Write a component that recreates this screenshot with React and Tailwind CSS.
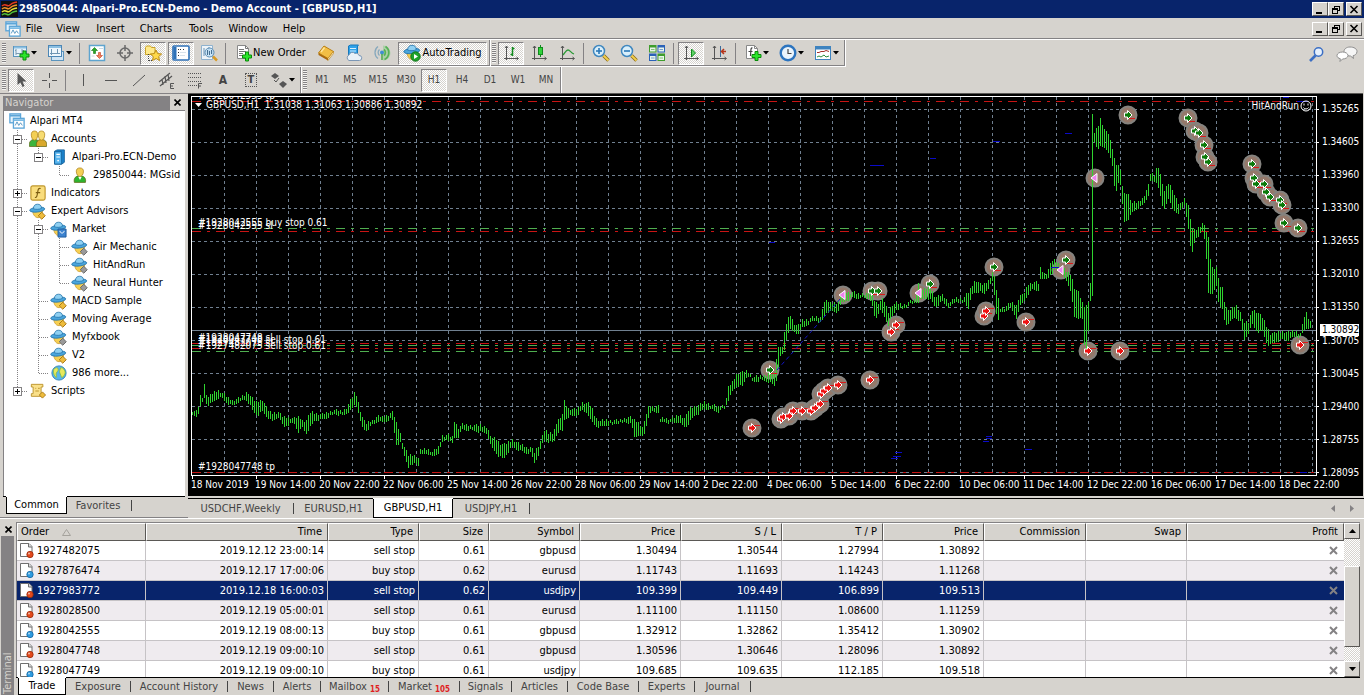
import { Fragment } from 'react';
import clsx from 'clsx';

const hatch = 'bg-[repeating-conic-gradient(#ffffff_0_25%,#d6d3ce_0_50%)] bg-[length:2px_2px]';
const raised = 'border border-t-white border-l-white border-r-[#5a5855] border-b-[#5a5855] bg-[#d6d3ce]';

/* ---------- icons ---------- */

function Icon({ children, size = 18, ...rest }) {
  return (
    <svg width={size} height={size} viewBox="0 0 18 18" fill="none" className="shrink-0" aria-hidden="true" {...rest}>
      {children}
    </svg>
  );
}

const Plus = ({ x = 7, y = 7 }) => (
  <path
    transform={`translate(${x} ${y})`}
    d="M3.500 .5h3v3h3v3h-3v3h-3v-3h-3v-3h3z"
    fill="#2be52b"
    stroke="#0a8a0a"
  />
);

const NewChartIcon = () => (
  <Icon>
    <rect x="1.500" y="2.500" width="13" height="10" fill="#e8f3fb" stroke="#5b94bd" />
    <path d="M2 3.500h12" stroke="#8cc0e2" strokeWidth="2" />
    <path d="M4 5v6M3 6.500h1M4 9.500h9M10 5v5M10 6.500h2" stroke="#7d9cb3" />
    <Plus x={7.5} y={6.5} />
  </Icon>
);

const ProfilesIcon = () => (
  <Icon>
    <rect x="4.500" y="7.500" width="12" height="9" fill="#cfe4f4" stroke="#5b94bd" />
    <rect x="1.500" y="1.500" width="13" height="11" fill="#eef6fc" stroke="#4c86b5" />
    <path d="M2 3h12" stroke="#8cc0e2" strokeWidth="2" />
    <path d="M4.500 5v6M3 9.500h10M10.500 5v5" stroke="#6f96b4" />
  </Icon>
);

const MarketWatchIcon = () => (
  <Icon>
    <rect x="1.500" y="1.500" width="15" height="15" fill="#fff" stroke="#5ea4cf" strokeWidth="1.500" />
    <path d="M6.500 3.500l3 3h-2v3h-2v-3h-2z" fill="#28a428" stroke="#0f7a0f" strokeWidth=".6" />
    <path d="M11.500 14.500l-3-3h2v-3h2v3h2z" fill="#f08060" stroke="#c23a1c" strokeWidth=".6" />
    <path d="M11 4.500h4M3.500 12h3" stroke="#c8d8e2" />
  </Icon>
);

const TargetIcon = () => (
  <Icon stroke="#6a6a6a">
    <circle cx="9" cy="9" r="5" strokeWidth="1.500" />
    <path d="M9 1v6M9 11v6M1 9h6M11 9h6" strokeWidth="1.500" />
  </Icon>
);

const star = 'M0 -5.500l1.700 3.600 3.900.4-2.900 2.600.8 3.900L0 3l-3.500 2 .8-3.900-2.900-2.600 3.900-.4z';

const FolderStarIcon = () => (
  <Icon>
    <path d="M1.500 3.500l1-1.500h4l1 1.500h3.500v7h-9.500z" fill="#ffe98a" stroke="#c9a227" />
    <path d="M4.500 10v7M5 16.500h3" stroke="#444" strokeDasharray="1 1" />
    <path d={star} transform="translate(12 11.500)" fill="#ffd94a" stroke="#b98a12" />
  </Icon>
);

const NavigatorIcon = () => (
  <Icon>
    <rect x="1" y="2" width="16" height="14" rx="1" fill="#fff" stroke="#2f72b8" strokeWidth="1.600" />
    <path d="M3 3v12" stroke="#2f72b8" strokeWidth="3" />
    <path d="M6.500 5v9M8 5.500h6" stroke="#333" strokeDasharray="1 2" />
    <path d="M8 8.500h6M8 11.500h5" stroke="#d9e3ec" />
  </Icon>
);

const TesterIcon = () => (
  <Icon>
    <path d="M1.500 1.500h11v14h-11z" fill="#eef4f9" stroke="#8fb2cf" />
    <path d="M4 4v8M9 3v7" stroke="#6b93b5" />
    <circle cx="9.500" cy="8.500" r="4.500" fill="#bfe0f6" fillOpacity=".8" stroke="#5d8db3" />
    <path d="M7.500 6v5M9.500 7v4M11.500 6v4" stroke="#456f92" />
    <path d="M13 12.500l4 4" stroke="#d89a24" strokeWidth="2.500" />
  </Icon>
);

const NewOrderIcon = () => (
  <Icon>
    <path d="M2.500 1.500h8l3 3v10h-11z" fill="#fff" stroke="#888" />
    <path d="M10.500 1.500v3h3M4 5.500h5M4 7.500h7M4 9.500h4M4 11.500h3" stroke="#777" />
    <Plus x={7} y={7.5} />
  </Icon>
);

const BookIcon = () => (
  <Icon>
    <path d="M1.500 9L7 2l9.500 5.500L11 14.500z" fill="#f2bf45" stroke="#b97e12" />
    <path d="M1.500 9v2l9.500 5.500v-2z" fill="#a9690c" />
    <path d="M11 14.500v2l5.500-7v-2z" fill="#fff1c4" stroke="#b97e12" strokeWidth=".6" />
    <path d="M4 8l3.500-4.500" stroke="#ffe59c" strokeWidth="1.500" />
  </Icon>
);

const VpsIcon = () => (
  <Icon>
    <path d="M3.500 2l2-1h8l-1 1v9h-9z" fill="#2fa3ea" stroke="#1679bd" />
    <path d="M5 4.500h6M5 7h6" stroke="#d7f0ff" strokeWidth="1.200" />
    <path d="M4 16.500a3 3 0 010-5.500 3.500 3.500 0 016-1.500 3 3 0 014 2 2.500 2.500 0 01.5 5z" fill="#e9f1f8" stroke="#7c97b5" />
  </Icon>
);

const SignalIcon = () => (
  <Icon>
    <path d="M5 2.500a7.500 7.500 0 000 12M6.500 5.500a4 4 0 000 6" stroke="#88a9bd" strokeWidth="1.300" />
    <path d="M10 1.500a7.200 7.200 0 010 15z" fill="#8fce8f" fillOpacity=".6" />
    <path d="M12.500 2.500a7.500 7.500 0 01-1 13M11 5.500a4 4 0 010 6" stroke="#57b157" strokeWidth="1.700" />
    <circle cx="9" cy="8.500" r="2" fill="#3e8fd0" />
    <path d="M9 10v6" stroke="#4aa84a" strokeWidth="1.500" />
  </Icon>
);

function HatIcon({ badge, size = 18 }) {
  return (
    <Icon size={size}>
      <path d="M4 8c0 5 3 7.500 5.500 7.500S14 13 14.500 7.500z" fill="#f6cf52" stroke="#c79520" strokeWidth=".8" />
      <ellipse cx="8.700" cy="7" rx="8" ry="2.600" fill="#4aa5dc" stroke="#1d6fa8" strokeWidth=".8" transform="rotate(-6 8.700 7)" />
      <path d="M4.500 6C5 2.500 6.500 1.300 9 1.300s4 1 4.300 4.300c-2 1.300-6.500 1.500-8.800.4z" fill="#8fd0f2" stroke="#1d6fa8" strokeWidth=".8" />
      {badge === 'play' && (
        <>
          <circle cx="12.500" cy="12.500" r="4.700" fill="#1fa32a" stroke="#0d7516" />
          <path d="M11 10l4 2.500-4 2.500z" fill="#fff" />
        </>
      )}
      {badge === 'gold' && <path d="M13.500 9.800l3.700 3.700-3.700 3.700-3.700-3.700z" fill="#eebc3c" stroke="#a87610" />}
      {badge === 'grey' && <path d="M13.500 9.800l3.700 3.700-3.700 3.700-3.700-3.700z" fill="#9a9a9a" stroke="#666" />}
      {badge === 'bag' && (
        <>
          <path d="M8.500 8.500h8.500v8.500h-8.500z" fill="#3c83cf" stroke="#1d5a9e" />
          <path d="M10.500 10.500c.5 3 4 3 4.500 0" stroke="#fff" />
        </>
      )}
    </Icon>
  );
}

const axes = 'M4.500 2v14M2 14.500h14M3 4l1.500-2L6 4M14.500 13l2 1.500-2 1.500';

const BarChartIcon = () => (
  <Icon>
    <path d={axes} stroke="#555" />
    <path d="M10.500 3v9M8.500 10.500h2M10.500 4.500h2" stroke="#118a1d" strokeWidth="1.500" />
  </Icon>
);

const CandleIcon = () => (
  <Icon>
    <path d={axes} stroke="#555" />
    <path d="M10.500 1v12" stroke="#118a1d" />
    <rect x="8.500" y="3.500" width="4" height="7" fill="#31d23b" stroke="#118a1d" />
  </Icon>
);

const LineChartIcon = () => (
  <Icon>
    <path d={axes} stroke="#555" />
    <path d="M5 11c2-2 3-5 5-5s3 3 6 4" stroke="#2b9a36" strokeWidth="1.300" />
  </Icon>
);

function ZoomIcon({ plus }) {
  return (
    <Icon>
      <path d="M11.500 11.500l5 5" stroke="#8a6a1c" strokeWidth="3.500" />
      <path d="M11.500 11.500l5 5" stroke="#f2cf4c" strokeWidth="2" />
      <circle cx="7" cy="7" r="5.500" fill="#d9effb" stroke="#3f87bf" strokeWidth="1.500" />
      <path d="M4 7h6" stroke="#2b78b8" strokeWidth="1.600" />
      {plus && <path d="M7 4v6" stroke="#2b78b8" strokeWidth="1.600" />}
    </Icon>
  );
}

const TileIcon = () => (
  <Icon>
    {[
      [1, 1, '#3f9d2c'],
      [9.5, 1, '#2b62b8'],
      [1, 9.5, '#2b62b8'],
      [9.5, 9.5, '#3f9d2c']
    ].map(([x, y, c]) => (
      <Fragment key={`${x}-${y}`}>
        <rect x={x} y={y} width="7.500" height="7.500" fill={c} />
        <rect x={x + 1} y={y + 2.5} width="5.500" height="4" fill="#e9f6ea" />
        <path d={`M${x + 2} ${y + 4.5}h3.500`} stroke={c} strokeOpacity=".6" />
      </Fragment>
    ))}
  </Icon>
);

const ScrollEndIcon = () => (
  <Icon>
    <path d={axes} stroke="#555" />
    <path d="M9.500 5l4 4-4 4z" fill="#5ed365" stroke="#118a1d" />
  </Icon>
);

const ShiftIcon = () => (
  <Icon>
    <path d={axes} stroke="#555" />
    <path d="M10.500 2v11" stroke="#3c6b9c" />
    <path d="M16 7.500h-4M14 5l-2.500 2.500L14 10" stroke="#b5341a" strokeWidth="1.500" />
  </Icon>
);

const IndicatorListIcon = () => (
  <Icon>
    <path d="M2.500 1.500h8l3 3v10h-11z" fill="#fff" stroke="#888" />
    <path d="M10.500 1.500v3h3" stroke="#888" />
    <path d="M8.500 4C6.500 3.500 7 6 6.500 12M4.500 7.500h4" stroke="#444" strokeWidth="1.200" />
    <Plus x={7.5} y={7} />
  </Icon>
);

const ClockIcon = () => (
  <Icon>
    <circle cx="9" cy="9" r="7.300" fill="#eaf4fc" stroke="#2c74bf" strokeWidth="2.400" />
    <path d="M9 5v4.500h3.500" stroke="#444" strokeWidth="1.200" />
  </Icon>
);

const TemplateIcon = () => (
  <Icon>
    <rect x="1.500" y="2.500" width="15" height="13" fill="#fff" stroke="#3f83bf" />
    <path d="M1 4h16" stroke="#3f83bf" strokeWidth="3" />
    <path d="M3 8.500h2l2-1h3l2-1 3 1" stroke="#a5302a" />
    <path d="M3 13l2-1 2 1 3-2 2 2 3-1" stroke="#2d8f3b" />
  </Icon>
);

const CursorIcon = () => (
  <Icon>
    <path d="M5.500 2v12l3-2.500 2 4.500 2-1-2-4.500h4z" fill="#555" />
  </Icon>
);

const DrawIcon = ({ d }) => (
  <Icon stroke="#555">
    <path d={d} />
  </Icon>
);

const ChannelIcon = () => (
  <Icon stroke="#555">
    <path d="M1 11L12 2M2 15L14 5M4 8l1 6M7 5l1 7M10 3l1 7" strokeWidth="1.200" />
    <path d="M16 12.500h-3.500v5H16M12.500 15H15" />
  </Icon>
);

const FiboIcon = () => (
  <Icon stroke="#555">
    <path d="M2 2.500h14M2 6.500h14M2 10.500h14M2 14.500h9" strokeDasharray="1 1" />
    <path d="M16 12.500h-3.500v5M12.500 15H15" />
  </Icon>
);

const ArrowsIcon = () => (
  <Icon>
    <path d="M1 5l4-3 4 3-4 3z" fill="#555" />
    <path d="M4 9l2 2 3-4" stroke="#555" />
    <path d="M9 13l4-3 4 3-4 4z" fill="#555" />
  </Icon>
);

const SearchIcon = () => (
  <Icon>
    <path d="M2 16l5.500-5.500" stroke="#3c6fc4" strokeWidth="2.600" />
    <circle cx="10.500" cy="7" r="4.200" fill="#e6f0fc" stroke="#3c6fc4" strokeWidth="1.500" />
  </Icon>
);

const ChatIcon = () => (
  <svg width="22" height="18" viewBox="0 0 22 18" aria-hidden="true">
    <path d="M14 2c4 0 7 1.800 7 4.500S18.500 10.500 17 10.800l.5 2.700-3-2.500C10.500 11 8 9 8 6.500S10.500 2 14 2z" fill="#f6f6f6" stroke="#8e8e8e" />
    <path d="M6.500 7c3 0 5.500 1.500 5.500 3.500S9.500 14 6.500 14l-2.500 2.500.3-2.800C2.500 13.300 1 12.300 1 10.500 1 8.500 3.500 7 6.500 7z" fill="#fff" stroke="#8e8e8e" />
  </svg>
);

const AppIcon = () => (
  <svg width="17" height="16" viewBox="0 0 17 16" fill="none" aria-hidden="true">
    <path d="M0 0h17v16H0z" fill="#111" />
    <path d="M1 5c4-4 5 2 8-1s4-2 7-3" stroke="#e83a20" strokeWidth="1.500" />
    <path d="M1 8c4-4 5 2 8-1s4-2 7-3" stroke="#f0922a" strokeWidth="1.500" />
    <path d="M1 11c4-4 5 2 8-1s4-2 7-3" stroke="#e9e23a" strokeWidth="1.500" />
    <path d="M1 14c4-4 5 2 8-1s4-2 7-3" stroke="#4fbf3a" strokeWidth="1.500" />
  </svg>
);

const Mt4Icon = () => (
  <Icon size={16}>
    <rect x="1" y="1" width="12" height="10" fill="#e6f3fc" stroke="#5da6d8" strokeWidth="1.500" />
    <path d="M1 3h12" stroke="#5da6d8" strokeWidth="2" />
    <rect x="5" y="6" width="12" height="11" fill="#fff" stroke="#5da6d8" strokeWidth="1.500" />
    <path d="M5 8h12" stroke="#7bbbe4" strokeWidth="2" />
    <path d="M7 14l2-4 2 4 2-3 2 3" stroke="#4d90bf" />
  </Icon>
);

const person = (transform, body, head) => (
  <g transform={transform}>
    <path d="M.5 16.500c-.8-5 1.500-7 5-7s5.800 2 5 7z" fill={body} stroke="#5c6210" strokeWidth=".7" />
    <path d="M5.500 1c2.200 0 3.400 1.500 3.200 4.200S7.300 10.200 5.500 10.200 2.500 8 2.300 5.200 3.300 1 5.500 1z" fill={head} stroke="#a97c13" strokeWidth=".7" />
  </g>
);

const AccountsIcon = () => (
  <Icon>
    {person('translate(0 0)', '#3cb53c', '#f3cf55')}
    {person('translate(7 0)', '#d9a92c', '#f7dc72')}
  </Icon>
);

const UserIcon = () => (
  <Icon size={16}>
    {person('translate(2 0) scale(1.25 1.05)', '#2fb52f', '#f3cf55')}
    <path d="M7 11l2 3.500 2-3.500z" fill="#fff" />
  </Icon>
);

const ServerIcon = () => (
  <Icon size={16}>
    <path d="M4 2.500L7 1h8v14l-3 2H4z" fill="#1c85d0" stroke="#126099" />
    <path d="M4 3h8v14H4z" fill="#55b4ef" stroke="#126099" />
    <path d="M6 6h4M6 9h4" stroke="#fff" strokeWidth="1.300" />
    <circle cx="8" cy="13" r="1" fill="#fff" />
  </Icon>
);

const FunctionIcon = () => (
  <Icon size={16}>
    <rect x="1" y="1" width="16" height="16" rx="2" fill="#f9dd7d" stroke="#bf962a" strokeWidth="1.300" />
    <path d="M12 4c-3-1-3 2-3.500 5S7.500 14.500 5.500 14M6.500 8.500h5" stroke="#7c5d12" strokeWidth="1.300" />
  </Icon>
);

const GlobeIcon = () => (
  <Icon size={16}>
    <circle cx="9" cy="9" r="8" fill="#58b5ea" stroke="#2a7fb8" />
    <path d="M3 5c3-3 5-2 5 0s-1 2-2 4 1 3 0 5c-2-1-4-5-3-9zM11 3c3 0 5 3 5 6-1 2-2 5-4 5-1-2-1-3-2-5s0-3 1-6z" fill="#e8e85c" stroke="#7fb83e" strokeWidth=".8" />
  </Icon>
);

const ScriptIcon = () => (
  <Icon size={16}>
    <path d="M1.500 1.500h13v3h-2V12h2v3h-13v-3h2V4.500h-2z" fill="#f9e08a" stroke="#b98f25" />
    <path d="M6 6h1M9 6h2M6 9h4" stroke="#b98f25" />
    <path d="M14 10l3.500 3.500L14 17l-3.500-3.500z" fill="#eebc3c" stroke="#a87610" />
  </Icon>
);

function OrderIcon({ side }) {
  return (
    <svg width="16" height="17" viewBox="0 0 16 17" fill="none" className="shrink-0" aria-hidden="true">
      <path d="M1.500 1.500h8.500l3 3v10h-11.500z" fill="#fff" stroke="#6f6f6f" />
      <path d="M9.500 1.500v3.500h3.500" fill="#ddd" stroke="#6f6f6f" />
      <circle cx="11" cy="12.500" r="3.200" fill={side === 'buy' ? '#2d9be0' : '#e2491c'} stroke={side === 'buy' ? '#1465a0' : '#97290a'} strokeWidth=".8" />
      <circle cx="10" cy="11.500" r="1" fill="#fff" fillOpacity=".6" />
    </svg>
  );
}

/* ---------- small controls ---------- */

const Caret = () => (
  <svg width="6" height="4" viewBox="0 0 6 4" className="ml-px shrink-0" aria-hidden="true">
    <path d="M0 0h6L3 3.500z" fill="#000" />
  </svg>
);

const Grip = () => (
  <div className="mx-px h-[20px] w-[4px] shrink-0 bg-[repeating-linear-gradient(#848284_0_1px,#f4f3f0_1px_2px)]" />
);

const Sep = () => <div className="mr-[3px] ml-[2px] h-[21px] w-px shrink-0 bg-[#848284]" />;

const Edge = () => <div className="h-full w-[2px] shrink-0 border-l border-[#848284] bg-white" />;

function ToolButton({ label, pressed, wide, children }) {
  return (
    <button
      type="button"
      aria-label={label}
      title={label}
      className={clsx(
        'flex h-[23px] shrink-0 items-center justify-center',
        wide ? 'w-[35px]' : 'w-[26px]',
        !wide && 'mx-px',
        pressed && 'border border-t-[#848284] border-l-[#848284] border-r-white border-b-white',
        pressed && hatch
      )}
    >
      {children}
      {wide && <Caret />}
    </button>
  );
}

function WindowButtons() {
  const base = clsx('flex h-[14px] w-[16px] items-center justify-center', raised);
  return (
    <div className="flex pr-[2px]">
      <button type="button" aria-label="Minimize" className={base}>
        <svg width="10" height="9" viewBox="0 0 10 9" shapeRendering="crispEdges">
          <path d="M1 7h6v2H1z" />
        </svg>
      </button>
      <button type="button" aria-label="Restore" className={base}>
        <svg width="10" height="9" viewBox="0 0 10 9" fill="none" stroke="#000" shapeRendering="crispEdges">
          <path d="M3.500 3V1.500h5v4H7M3 1h6" />
          <path d="M1.500 3.500h5v4.500h-5zM1 4.500h6" />
        </svg>
      </button>
      <button type="button" aria-label="Close" className={clsx(base, 'ml-[2px]')}>
        <svg width="10" height="9" viewBox="0 0 10 9" stroke="#000" strokeWidth="1.600">
          <path d="M1.500 1l7 7M8.500 1l-7 7" />
        </svg>
      </button>
    </div>
  );
}

const SmallClose = ({ label }) => (
  <button type="button" aria-label={label} className="flex h-[14px] w-[14px] shrink-0 items-center justify-center">
    <svg width="7" height="7" viewBox="0 0 7 7" stroke="#000" strokeWidth="1.600">
      <path d="M.5 .5l6 6M6.500 .5l-6 6" />
    </svg>
  </button>
);

/* ---------- top bars ---------- */

const menus = [
  ['File', 'w-[26px]'],
  ['View', 'w-[42px]'],
  ['Insert', 'w-[43px]'],
  ['Charts', 'w-[48px]'],
  ['Tools', 'w-[42px]'],
  ['Window', 'w-[52px]'],
  ['Help', 'w-[40px]']
];

function TitleBar() {
  return (
    <header className="flex h-[18px] shrink-0 items-center bg-[#08246b] text-white">
      <div className="mx-px">
        <AppIcon />
      </div>
      <h1 className="flex-1 truncate text-[11px] font-bold">
        29850044: Alpari-Pro.ECN-Demo - Demo Account - [GBPUSD,H1]
      </h1>
      <WindowButtons />
    </header>
  );
}

function MenuBar() {
  return (
    <nav className="flex h-[22px] shrink-0 items-center border-b border-white shadow-[inset_0_-1px_#848284]">
      <div className="ml-[5px]">
        <Mt4Icon />
      </div>
      <div className="flex flex-1">
        {menus.map(([name, width]) => (
          <button key={name} type="button" className={clsx('text-center', width)}>
            {name}
          </button>
        ))}
      </div>
      <WindowButtons />
    </nav>
  );
}

const timeframes = ['M1', 'M5', 'M15', 'M30', 'H1', 'H4', 'D1', 'W1', 'MN'];

function Toolbars() {
  return (
    <div className="flex shrink-0">
      <div className="flex-1">
        <div className="flex h-[27px] w-fit items-center border-b border-white pl-px shadow-[inset_0_-1px_#848284]">
          <Grip />
          <ToolButton label="New chart" wide>
            <NewChartIcon />
          </ToolButton>
          <ToolButton label="Profiles" wide>
            <ProfilesIcon />
          </ToolButton>
          <Sep />
          <ToolButton label="Market Watch">
            <MarketWatchIcon />
          </ToolButton>
          <ToolButton label="Data Window">
            <TargetIcon />
          </ToolButton>
          <ToolButton label="Navigator" pressed>
            <FolderStarIcon />
          </ToolButton>
          <ToolButton label="Terminal" pressed>
            <NavigatorIcon />
          </ToolButton>
          <ToolButton label="Strategy Tester">
            <TesterIcon />
          </ToolButton>
          <Sep />
          <button type="button" className="flex h-[23px] w-[83px] items-center justify-center text-[11px] whitespace-nowrap">
            <NewOrderIcon />
            New Order
          </button>
          <ToolButton label="MetaEditor">
            <BookIcon />
          </ToolButton>
          <ToolButton label="Virtual hosting">
            <VpsIcon />
          </ToolButton>
          <ToolButton label="Signals">
            <SignalIcon />
          </ToolButton>
          <button
            type="button"
            className={clsx(
              'mx-[2px] flex h-[23px] w-[89px] items-center justify-center gap-px border border-t-[#848284] border-l-[#848284] border-r-white border-b-white whitespace-nowrap',
              hatch
            )}
          >
            <HatIcon badge="play" />
            AutoTrading
          </button>
          <Edge />
          <Grip />
          <ToolButton label="Bar chart" pressed>
            <BarChartIcon />
          </ToolButton>
          <ToolButton label="Candlesticks">
            <CandleIcon />
          </ToolButton>
          <ToolButton label="Line chart">
            <LineChartIcon />
          </ToolButton>
          <Sep />
          <ToolButton label="Zoom in">
            <ZoomIcon plus />
          </ToolButton>
          <ToolButton label="Zoom out">
            <ZoomIcon />
          </ToolButton>
          <ToolButton label="Tile windows">
            <TileIcon />
          </ToolButton>
          <Sep />
          <ToolButton label="Auto scroll" pressed>
            <ScrollEndIcon />
          </ToolButton>
          <ToolButton label="Chart shift">
            <ShiftIcon />
          </ToolButton>
          <Sep />
          <ToolButton label="Indicators" wide>
            <IndicatorListIcon />
          </ToolButton>
          <ToolButton label="Periods" wide>
            <ClockIcon />
          </ToolButton>
          <ToolButton label="Templates" wide>
            <TemplateIcon />
          </ToolButton>
          <Edge />
        </div>

        <div className="flex h-[26px] w-fit items-center pl-px text-[#444]">
          <Grip />
          <ToolButton label="Cursor" pressed>
            <CursorIcon />
          </ToolButton>
          <ToolButton label="Crosshair">
            <DrawIcon d="M9.500 2v5M9.500 12v5M2 9.500h5M12 9.500h5" />
          </ToolButton>
          <Sep />
          <ToolButton label="Vertical line">
            <DrawIcon d="M9.500 3v12" />
          </ToolButton>
          <ToolButton label="Horizontal line">
            <DrawIcon d="M3 9.500h12" />
          </ToolButton>
          <ToolButton label="Trendline">
            <DrawIcon d="M3 15L15 4" />
          </ToolButton>
          <ToolButton label="Equidistant channel">
            <ChannelIcon />
          </ToolButton>
          <ToolButton label="Fibonacci retracement">
            <FiboIcon />
          </ToolButton>
          <ToolButton label="Text">
            <span className="text-[12px] font-bold">A</span>
          </ToolButton>
          <ToolButton label="Text label">
            <span className="border border-dotted border-[#555] px-[2px] text-[11px] leading-[12px] font-bold">T</span>
          </ToolButton>
          <ToolButton label="Arrows" wide>
            <ArrowsIcon />
          </ToolButton>
          <Edge />
          <Grip />
          {timeframes.map((t) => (
            <ToolButton key={t} label={t} pressed={t === 'H1'}>
              <span className="text-[10px]">{t}</span>
            </ToolButton>
          ))}
          <Edge />
        </div>
      </div>
      <div className="flex h-[27px] items-center gap-[10px] pr-[6px]">
        <button type="button" aria-label="Search">
          <SearchIcon />
        </button>
        <button type="button" aria-label="Chat">
          <ChatIcon />
        </button>
      </div>
    </div>
  );
}

/* ---------- navigator ---------- */

// guides: l = line, t = tee, c = corner, b = blank; + and - put a toggle on the branch
const tree = [
  { label: 'Alpari MT4', guides: [], icon: <Mt4Icon /> },
  { label: 'Accounts', guides: ['t-'], icon: <AccountsIcon /> },
  { label: 'Alpari-Pro.ECN-Demo', guides: ['l', 'c-'], icon: <ServerIcon /> },
  { label: '29850044: MGsid', guides: ['l', 'b', 'c'], icon: <UserIcon /> },
  { label: 'Indicators', guides: ['t+'], icon: <FunctionIcon /> },
  { label: 'Expert Advisors', guides: ['t-'], icon: <HatIcon size={17} badge="gold" /> },
  { label: 'Market', guides: ['l', 't-'], icon: <HatIcon size={17} badge="bag" /> },
  { label: 'Air Mechanic', guides: ['l', 'l', 't'], icon: <HatIcon size={17} badge="grey" /> },
  { label: 'HitAndRun', guides: ['l', 'l', 't'], icon: <HatIcon size={17} badge="grey" /> },
  { label: 'Neural Hunter', guides: ['l', 'l', 'c'], icon: <HatIcon size={17} badge="grey" /> },
  { label: 'MACD Sample', guides: ['l', 't'], icon: <HatIcon size={17} badge="gold" /> },
  { label: 'Moving Average', guides: ['l', 't'], icon: <HatIcon size={17} badge="gold" /> },
  { label: 'Myfxbook', guides: ['l', 't'], icon: <HatIcon size={17} badge="grey" /> },
  { label: 'V2', guides: ['l', 't'], icon: <HatIcon size={17} badge="gold" /> },
  { label: '986 more...', guides: ['l', 'c'], icon: <GlobeIcon /> },
  { label: 'Scripts', guides: ['c+'], icon: <ScriptIcon /> }
];

function Guide({ type }) {
  const [kind, toggle] = type;
  return (
    <svg width="21" height="18" viewBox="0 0 21 18" fill="none" className="shrink-0" shapeRendering="crispEdges" aria-hidden="true">
      {kind !== 'b' && (
        <path d={kind === 'c' ? 'M10.500 0v10' : 'M10.500 0v18'} stroke="#848284" strokeDasharray="1 1" />
      )}
      {(kind === 't' || kind === 'c') && <path d="M11 9.500h10" stroke="#848284" strokeDasharray="1 1" />}
      {toggle && (
        <>
          <rect x="6.500" y="5.500" width="8" height="8" fill="#fff" stroke="#848284" />
          <path d={toggle === '+' ? 'M8 9.500h5M10.500 7v5' : 'M8 9.500h5'} stroke="#000" />
        </>
      )}
    </svg>
  );
}

function Navigator() {
  return (
    <aside className="flex w-[188px] shrink-0 flex-col border-t border-b border-[#848284] px-[3px] pt-px pb-[3px]">
      <div className="flex h-[15px] shrink-0 items-center">
        <h2 className="h-[14px] w-[167px] bg-[#848284] px-[2px] text-[11px] leading-[13px] text-[#d6d3ce]">Navigator</h2>
        <SmallClose label="Close Navigator" />
      </div>
      <div className="min-h-0 flex-1 overflow-hidden border-t border-l border-[#848284] bg-white pt-px pl-[3px]">
        <ul>
          {tree.map((n) => (
            <li key={n.label} className="flex h-[18px] items-center whitespace-nowrap">
              {n.guides.map((g, i) => (
                <Guide key={i} type={g} />
              ))}
              <span className="mr-[5px] ml-px flex w-[17px] shrink-0 justify-center">{n.icon}</span>
              {n.label}
            </li>
          ))}
        </ul>
      </div>
      <div className="flex h-[18px] shrink-0 border-t border-black text-[#444]">
        <button type="button" className="ml-[3px] w-[61px] border-r border-b border-l border-black bg-white text-black shadow-[0_-1px_#fff]">
          Common
        </button>
        <button type="button" className="w-[62px]">
          Favorites
        </button>
        <span className="my-[3px] ml-[2px] w-px bg-[#444]" />
      </div>
    </aside>
  );
}

/* ---------- chart ---------- */

// x, high, low along the price curve
const curve = [
  [192, 410, 416], [197, 412, 416], [200, 396, 407], [203, 397, 401], [204, 384, 398], [206, 393, 403], [208, 397, 405],
  [213, 392, 402], [217, 390, 398], [222, 393, 399], [227, 397, 403], [232, 400, 406], [238, 398, 402],
  [243, 396, 400], [247, 391, 401], [253, 400, 412], [257, 402, 415], [262, 399, 412], [267, 410, 417],
  [272, 413, 422], [278, 412, 417], [283, 417, 427], [290, 417, 424], [295, 419, 424], [297, 416, 433],
  [302, 420, 428], [306, 420, 433], [310, 412, 427], [315, 413, 420], [322, 414, 420], [328, 412, 417],
  [335, 410, 414], [342, 411, 416], [347, 406, 413], [351, 399, 410], [355, 391, 403], [358, 402, 412],
  [361, 415, 427], [365, 424, 431], [372, 420, 425], [378, 416, 421], [383, 417, 423], [390, 413, 419],
  [393, 412, 421], [395, 420, 445], [400, 433, 443], [403, 445, 453], [408, 455, 467], [412, 455, 466],
  [415, 455, 462], [418, 458, 465], [420, 450, 455], [427, 449, 453], [432, 452, 457], [438, 447, 453],
  [442, 435, 443], [447, 435, 439], [452, 437, 444], [454, 421, 438], [458, 427, 437], [462, 424, 430],
  [468, 425, 430], [480, 425, 432], [487, 427, 434], [490, 437, 445], [495, 438, 453], [500, 443, 457],
  [503, 445, 459], [507, 443, 453], [512, 439, 447], [518, 443, 450], [525, 447, 453], [530, 447, 453],
  [534, 452, 463], [539, 445, 453], [543, 430, 440], [548, 433, 442], [553, 433, 443], [557, 419, 433],
  [561, 420, 430], [562, 413, 432], [564, 401, 420], [568, 408, 417], [577, 410, 415], [582, 402, 411],
  [587, 403, 413], [591, 406, 422], [595, 418, 426], [600, 421, 427], [610, 420, 424], [620, 420, 423],
  [627, 417, 422], [631, 417, 425], [634, 420, 437], [638, 422, 435], [642, 427, 437], [645, 420, 433],
  [647, 407, 418], [652, 406, 412], [658, 406, 412], [660, 418, 422], [670, 419, 423], [678, 415, 422],
  [685, 418, 428], [689, 408, 422], [694, 406, 416], [699, 405, 413], [704, 402, 409], [710, 404, 409],
  [717, 407, 412], [725, 404, 407], [728, 387, 400], [732, 382, 392], [737, 373, 385], [742, 372, 387],
  [747, 371, 375], [753, 377, 382], [762, 376, 380], [768, 373, 382], [774, 373, 386], [777, 350, 378],
  [779, 344, 358], [782, 347, 355], [785, 327, 347], [787, 320, 332], [790, 315, 330], [795, 325, 333],
  [799, 325, 333], [802, 320, 328], [808, 319, 324], [815, 317, 320], [820, 317, 323], [823, 303, 320],
  [826, 301, 312], [831, 303, 312], [837, 302, 312], [842, 292, 303], [847, 292, 300], [852, 292, 298],
  [860, 294, 298], [868, 293, 298], [872, 295, 307], [875, 303, 320], [879, 302, 310], [883, 299, 315],
  [888, 312, 325], [891, 305, 318], [897, 303, 308], [902, 305, 310], [908, 302, 305], [915, 300, 303],
  [918, 283, 302], [921, 290, 300], [925, 289, 298], [930, 288, 300], [935, 297, 307], [942, 295, 302],
  [949, 303, 308], [955, 298, 302], [963, 298, 301], [968, 292, 308], [972, 285, 295], [975, 280, 292],
  [980, 284, 292], [983, 285, 295], [988, 280, 288], [992, 272, 282], [994, 277, 295], [997, 295, 322],
  [1000, 308, 313], [1005, 307, 311], [1010, 302, 308], [1016, 305, 318], [1019, 295, 307], [1023, 295, 303],
  [1027, 285, 295], [1032, 282, 290], [1038, 283, 290], [1040, 268, 280], [1045, 275, 279], [1052, 260, 275],
  [1055, 260, 267], [1060, 265, 272], [1067, 272, 282], [1071, 275, 295], [1074, 287, 317], [1078, 292, 318],
  [1082, 303, 320], [1084, 306, 345], [1086, 305, 350], [1088, 300, 330], [1089, 282, 308], [1091, 283, 297], [1092, 115, 297],
  [1094, 132, 142], [1097, 128, 148], [1100, 118, 147], [1105, 132, 148], [1108, 133, 152], [1112, 148, 167],
  [1115, 163, 195], [1118, 165, 182], [1121, 175, 188], [1123, 195, 222], [1127, 192, 220], [1132, 203, 213],
  [1138, 202, 208], [1143, 197, 205], [1148, 185, 195], [1150, 173, 182], [1155, 175, 182], [1157, 162, 182],
  [1161, 178, 202], [1163, 192, 212], [1168, 183, 198], [1172, 188, 210], [1175, 198, 212], [1179, 205, 213],
  [1184, 198, 205], [1188, 205, 228], [1191, 228, 257], [1195, 230, 238], [1202, 223, 232], [1205, 228, 242],
  [1208, 238, 292], [1211, 268, 297], [1216, 267, 285], [1219, 285, 308], [1222, 288, 310], [1225, 307, 325],
  [1230, 310, 322], [1235, 305, 317], [1240, 312, 322], [1244, 323, 340], [1248, 322, 333], [1252, 310, 325],
  [1257, 312, 332], [1262, 317, 332], [1267, 328, 345], [1270, 333, 345], [1275, 333, 342], [1282, 331, 340],
  [1288, 332, 340], [1295, 331, 336], [1300, 333, 337], [1303, 322, 332], [1305, 311, 328], [1308, 318, 328],
  [1311, 323, 330]
];

function priceBars() {
  let d = '';
  let k = 0;
  for (let x = 192; x <= 1311; x += 2) {
    while (k < curve.length - 2 && curve[k + 1][0] <= x) k += 1;
    const [x0, h0, l0] = curve[k];
    const [x1, h1, l1] = curve[k + 1];
    const t = (x - x0) / (x1 - x0);
    const wobble = ((x * 37) % 7) - 3;
    const high = Math.round(h0 + (h1 - h0) * t + wobble * 0.5);
    const low = Math.round(l0 + (l1 - l0) * t + (((x * 53) % 5) - 2) * 0.6);
    d += `M${x}.5 ${high}V${Math.max(low, high + 3)}`;
  }
  return d;
}

const bars = priceBars();
const gridX = Array.from({ length: 35 }, (_, i) => 224 + i * 32);
const gridY = Array.from({ length: 12 }, (_, i) => 109 + i * 33);

const levels = [
  [101, '#c81414'], [228, '#4fae4f'], [231, '#c81414'], [343, '#c81414'],
  [345, '#4fae4f'], [348, '#c81414'], [351, '#4fae4f'], [472, '#c81414']
];

const buys = [
  [770, 370], [872, 291], [878, 291], [930, 284], [994, 267], [1066, 260], [1128, 115], [1188, 118], [1195, 131],
  [1199, 133], [1204, 145], [1205, 157], [1208, 162], [1252, 164], [1254, 178], [1256, 184], [1264, 184],
  [1266, 192], [1270, 197], [1280, 200], [1282, 205], [1284, 223], [1298, 228]
];

const sells = [
  [752, 428], [781, 419], [783, 417], [789, 416], [793, 411], [802, 411], [811, 411], [815, 408], [820, 404],
  [821, 394], [824, 391], [828, 388], [838, 385], [870, 380], [891, 332], [896, 325], [984, 316], [986, 311],
  [1026, 322], [1088, 351], [1120, 351], [1300, 345]
];

const closes = [[843, 295], [919, 293], [1061, 270], [1095, 178]];

const blueMarks = 'M769 242.500h6M870 165.500h14M930 158.500h6M993 141.500h7M1065 133.500h7M1283 97.500h6M1297 101.500h11M891 458.500h7M893 456.500h8M895 452.500h7M983 441.500h6M986 438.500h6M986 436.500h6M1025 449.500h7M1300 472.500h7M1051 267.500h8';

function Marker({ x, y, color, under }) {
  return (
    <g transform={`translate(${x} ${y})`}>
      <path d="M-3.500-2h3v-2.500L4 0-.5 4.500V2h-3z" fill={color} stroke="#fff" />
      <path d={under ? 'M1 3.500h6' : 'M2-2.500h6'} stroke="#d81a1a" />
    </g>
  );
}

const Halo = ({ x, y }) => <circle cx={x} cy={y} r="8.500" fill="#94786a" stroke="#85837f" strokeWidth="2" />;

function Plot() {
  return (
    <svg viewBox="191 96 1129 383" preserveAspectRatio="none" className="block h-full w-full" fill="none" role="img" aria-label="GBPUSD hourly bar chart">
      <g shapeRendering="crispEdges">
        <g stroke="#708090" strokeDasharray="3 3">
          {gridX.map((x) => (
            <path key={x} d={`M${x}.5 97V475`} />
          ))}
          {gridY.map((y) => (
            <path key={y} d={`M192 ${y}.5H1316`} />
          ))}
        </g>
        {levels.map(([y, c]) => (
          <path key={y} d={`M192 ${y}.5H1316`} stroke={c} strokeDasharray="9 6 3 6" />
        ))}
        <path d="M192 330.500H1316" stroke="#708090" />
      </g>
      {[...buys, ...sells, ...closes].map(([x, y], i) => (
        <Halo key={i} x={x} y={y} />
      ))}
      <g shapeRendering="crispEdges">
        <path d={bars} stroke="#2fd42f" />
        <path d={blueMarks} stroke="#0a0ac8" />
      </g>
      <path d="M777 370L841 298" stroke="#1414c8" strokeDasharray="4 3" />
      {buys.map(([x, y]) => (
        <Marker key={`${x}-${y}`} x={x} y={y} color="#0a7a0a" under />
      ))}
      {sells.map(([x, y]) => (
        <Marker key={`${x}-${y}`} x={x} y={y} color="#ee1111" />
      ))}
      {closes.map(([x, y]) => (
        <path key={x} d={`M${x - 4} ${y}L${x + 2} ${y - 4.5}V${y + 4.5}Z`} fill="#ee82ee" stroke="#fff" />
      ))}
      <g shapeRendering="crispEdges" stroke="#fff">
        <path d="M191 96.500H1316.500V475.500H191.500V96" />
        {Array.from({ length: 18 }, (_, i) => (
          <path key={i} d={`M${192 + i * 64}.5 476v3`} />
        ))}
        {gridY.map((y) => (
          <path key={y} d={`M1317 ${y}.5h2`} />
        ))}
      </g>
    </svg>
  );
}

const prices = ['1.35265', '1.34605', '1.33960', '1.33300', '1.32655', '1.32010', '1.31350', '1.30705', '1.30045', '1.29400', '1.28755', '1.28095'];

const times = [
  '18 Nov 2019', '19 Nov 14:00', '20 Nov 22:00', '22 Nov 06:00', '25 Nov 14:00', '26 Nov 22:00', '28 Nov 06:00',
  '29 Nov 14:00', '2 Dec 22:00', '4 Dec 06:00', '5 Dec 14:00', '6 Dec 22:00', '10 Dec 06:00', '11 Dec 14:00',
  '12 Dec 22:00', '16 Dec 06:00', '17 Dec 14:00', '18 Dec 22:00'
];

const orderLabels = [
  ['top-[-6px]', '#1928042555 tp'],
  ['top-[121px]', '#1928042555 buy stop 0.61'],
  ['top-[124px]', '#1928042555 sl'],
  ['top-[236px]', '#1928047748 sl'],
  ['top-[238px]', '#1928047748 sell stop 0.61'],
  ['top-[241px]', '#1927482075 sl'],
  ['top-[244px]', '#1927482075 sell stop 0.61'],
  ['top-[365px]', '#1928047748 tp']
];

function Chart() {
  return (
    <div className="mr-px flex min-h-0 flex-1 flex-col bg-black pt-[3px] pb-[5px] pl-[3px] text-[10px] leading-[12px] text-white shadow-[inset_0_1px_#5a5855]">
      <div className="flex min-h-0 flex-1">
        <div className="relative min-w-0 flex-1">
          <Plot />
          <div className="absolute inset-0 overflow-hidden whitespace-nowrap">
            {orderLabels.map(([top, text]) => (
              <span key={text} className={clsx('absolute left-[7px]', top)}>
                {text}
              </span>
            ))}
            <span className="absolute top-[3px] left-[4px] flex items-center gap-[4px]">
              <svg width="7" height="4" viewBox="0 0 7 4" aria-hidden="true">
                <path d="M0 0h7L3.500 4z" fill="#fff" />
              </svg>
              <span>GBPUSD,H1&nbsp; 1.31038 1.31063 1.30886 1.30892</span>
            </span>
            <span className="absolute top-[4px] right-[8px] flex items-center gap-px">
              HitAndRun
              <svg width="12" height="12" viewBox="0 0 12 12" fill="none" stroke="#fff" aria-hidden="true">
                <circle cx="6" cy="6" r="5" />
                <path d="M4 3.500v2M8 3.500v2M3.500 7.500c1 2 4 2 5 0" />
              </svg>
            </span>
          </div>
        </div>
        <div className="relative flex w-[43px] flex-col justify-between pt-[7px] pl-[2px]">
          {prices.map((p) => (
            <span key={p}>{p}</span>
          ))}
          <span className="absolute top-[228px] left-0 w-[39px] bg-white pl-[2px] text-black">1.30892</span>
        </div>
      </div>
      <div className="mr-[20px] grid grid-cols-18 whitespace-nowrap">
        {times.map((t) => (
          <span key={t}>{t}</span>
        ))}
      </div>
    </div>
  );
}

function ChartTabs() {
  return (
    <div className="mt-[2px] flex h-[20px] shrink-0 border-t border-black text-[#444]">
      <button type="button" className="w-[105px]">
        USDCHF,Weekly
      </button>
      <span className="my-[4px] w-px bg-[#444]" />
      <button type="button" className="w-[79px]">
        EURUSD,H1
      </button>
      <button type="button" className="w-[80px] border-r border-b border-l border-black bg-white text-black shadow-[0_-1px_#fff]">
        GBPUSD,H1
      </button>
      <button type="button" className="w-[76px]">
        USDJPY,H1
      </button>
      <span className="my-[4px] w-px bg-[#444]" />
      <div className="flex flex-1 items-center justify-end gap-[15px] pr-[10px]">
        <button type="button" aria-label="Scroll tabs left">
          <svg width="4" height="7" viewBox="0 0 4 7">
            <path d="M4 0v7L0 3.500z" fill="#848284" />
          </svg>
        </button>
        <button type="button" aria-label="Scroll tabs right">
          <svg width="4" height="7" viewBox="0 0 4 7">
            <path d="M0 0v7l4-3.500z" fill="#848284" />
          </svg>
        </button>
      </div>
    </div>
  );
}

/* ---------- terminal ---------- */

const columns = [
  ['Order', 'w-[129px]'],
  ['Time', 'w-[182px]'],
  ['Type', 'w-[91px]'],
  ['Size', 'w-[70px]'],
  ['Symbol', 'w-[91px]'],
  ['Price', 'w-[101px]'],
  ['S / L', 'w-[101px]'],
  ['T / P', 'w-[101px]'],
  ['Price', 'w-[101px]'],
  ['Commission', 'w-[102px]'],
  ['Swap', 'w-[101px]'],
  ['Profit', '']
];

const orders = [
  ['1927482075', '2019.12.12 23:00:14', 'sell stop', '0.61', 'gbpusd', '1.30494', '1.30544', '1.27994', '1.30892'],
  ['1927876474', '2019.12.17 17:00:06', 'buy stop', '0.62', 'eurusd', '1.11743', '1.11693', '1.14243', '1.11268'],
  ['1927983772', '2019.12.18 16:00:03', 'sell stop', '0.62', 'usdjpy', '109.399', '109.449', '106.899', '109.513'],
  ['1928028500', '2019.12.19 05:00:01', 'sell stop', '0.61', 'eurusd', '1.11100', '1.11150', '1.08600', '1.11259'],
  ['1928042555', '2019.12.19 08:00:13', 'buy stop', '0.61', 'gbpusd', '1.32912', '1.32862', '1.35412', '1.30902'],
  ['1928047748', '2019.12.19 09:00:10', 'sell stop', '0.61', 'gbpusd', '1.30596', '1.30646', '1.28096', '1.30892'],
  ['1928047749', '2019.12.19 09:00:10', 'buy stop', '0.61', 'usdjpy', '109.685', '109.635', '112.185', '109.518']
];

const selected = '1927983772';

function OrderTable() {
  return (
    <table className="w-full table-fixed border-separate border-spacing-0 whitespace-nowrap">
      <thead>
        <tr className="h-[18px]">
          {columns.map(([name, width], i) => (
            <th
              key={i}
              scope="col"
              className={clsx(
                'border border-t-white border-r-[#5a5855] border-b-[#5a5855] border-l-white bg-[#d6d3ce] p-0 font-normal',
                i === 0 ? 'pl-[3px] text-left' : 'pr-[5px] text-right',
                width
              )}
            >
              {name}
              {i === 0 && (
                <svg width="9" height="7" viewBox="0 0 9 7" className="ml-[13px] inline" aria-hidden="true">
                  <path d="M4.500 .5l4 6h-8z" fill="none" stroke="#a5a29c" />
                </svg>
              )}
            </th>
          ))}
        </tr>
      </thead>
      <tbody>
        {orders.map((o, r) => (
          <tr
            key={o[0]}
            className={clsx('h-[20px]', o[0] === selected ? 'bg-[#08246b] text-white' : r % 2 ? 'bg-[#efebef]' : 'bg-white')}
          >
            {o.map((v, i) => (
              <td key={i} className={clsx('border-r border-b border-[#c6c3c6] p-0', i ? 'pr-[3px] text-right' : 'pl-[2px]')}>
                {i === 0 ? (
                  <span className="flex items-center gap-[2px]">
                    <OrderIcon side={o[1 + 1].startsWith('buy') ? 'buy' : 'sell'} />
                    {v}
                  </span>
                ) : (
                  v
                )}
              </td>
            ))}
            <td className="border-r border-b border-[#c6c3c6] p-0" />
            <td className="border-r border-b border-[#c6c3c6] p-0" />
            <td className="border-b border-[#c6c3c6] p-0 pr-[6px]">
              <button type="button" aria-label={`Close order ${o[0]}`} className="ml-auto flex">
                <svg width="9" height="9" viewBox="0 0 9 9" stroke="#848284" strokeWidth="2">
                  <path d="M1 1l7 7M8 1L1 8" />
                </svg>
              </button>
            </td>
          </tr>
        ))}
      </tbody>
    </table>
  );
}

function ScrollBar() {
  return (
    <div className={clsx('flex w-[16px] shrink-0 flex-col', hatch)}>
      <button type="button" aria-label="Scroll up" className={clsx('flex h-[16px] items-center justify-center', raised)}>
        <svg width="7" height="4" viewBox="0 0 7 4">
          <path d="M3.500 0L7 4H0z" />
        </svg>
      </button>
      <div className={clsx('mt-[27px] h-[81px]', raised)} />
      <button type="button" aria-label="Scroll down" className={clsx('mt-auto flex h-[16px] items-center justify-center', raised)}>
        <svg width="7" height="4" viewBox="0 0 7 4">
          <path d="M0 0h7L3.500 4z" />
        </svg>
      </button>
    </div>
  );
}

const terminalTabs = [
  ['Exposure', 'w-[64px]'],
  ['Account History', 'w-[96px]'],
  ['News', 'w-[45px]'],
  ['Alerts', 'w-[46px]'],
  ['Mailbox', 'w-[67px]', '15'],
  ['Market', 'w-[70px]', '105'],
  ['Signals', 'w-[51px]'],
  ['Articles', 'w-[55px]'],
  ['Code Base', 'w-[70px]'],
  ['Experts', 'w-[55px]'],
  ['Journal', 'w-[55px]']
];

function Terminal() {
  return (
    <section className="flex h-[177px] shrink-0 border-t border-white pt-[3px]">
      <div className="flex w-[16px] shrink-0 flex-col items-center">
        <SmallClose label="Close Terminal" />
        <h2 className="mr-px min-h-0 w-[13px] flex-1 rotate-180 bg-[#848284] pt-px text-[11px] leading-[13px] text-[#d6d3ce] [writing-mode:vertical-rl]">
          Terminal
        </h2>
      </div>
      <div className="flex min-w-0 flex-1 flex-col pr-[4px]">
        <div className="flex min-h-0 flex-1 overflow-hidden border-t border-l border-[#848284]">
          <div className="min-w-0 flex-1">
            <OrderTable />
          </div>
          <ScrollBar />
        </div>
        <div className="flex h-[18px] shrink-0 border-t border-black text-[#444]">
          <button type="button" className="ml-[2px] h-[17px] w-[48px] border-r border-b border-l border-black bg-white text-black shadow-[0_-1px_#fff]">
            Trade
          </button>
          {terminalTabs.map(([name, width, count]) => (
            <Fragment key={name}>
              <button type="button" className={clsx('flex items-center justify-center gap-[3px] whitespace-nowrap', width)}>
                {name}
                {count && <span className="pt-[6px] text-[8px] leading-[10px] font-bold text-[#e01f1f]">{count}</span>}
              </button>
              <span className="my-[3px] w-px bg-[#444]" />
            </Fragment>
          ))}
        </div>
      </div>
    </section>
  );
}

export default function App() {
  return (
    <div className="flex h-screen min-h-[480px] flex-col overflow-hidden bg-[#d6d3ce] font-['DejaVu_Sans_Condensed','DejaVu_Sans',sans-serif] text-[11px] leading-[14px] text-black">
      <TitleBar />
      <MenuBar />
      <Toolbars />
      <main className="flex min-h-0 flex-1">
        <Navigator />
        <div className="flex min-w-0 flex-1 flex-col">
          <Chart />
          <ChartTabs />
        </div>
      </main>
      <Terminal />
    </div>
  );
}
